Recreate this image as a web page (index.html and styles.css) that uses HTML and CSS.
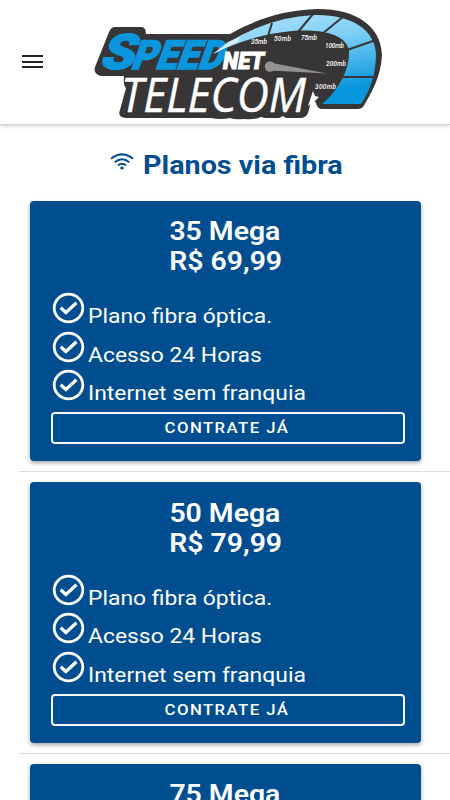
FILE: index.html
```html
<!DOCTYPE html>
<html lang="pt-BR">
<head>
<meta charset="utf-8">
<title>SpeedNet Telecom</title>
<link rel="stylesheet" href="styles.css">
</head>
<body>
<svg class="defs" width="0" height="0" aria-hidden="true">
  <symbol id="check" viewBox="0 0 32 32">
    <ellipse cx="16" cy="16" rx="14.3" ry="13.8" fill="none" stroke="currentColor" stroke-width="2.8"/>
    <path d="M8.200 15.700L13.400 20.500L24 10.800" fill="none" stroke="currentColor" stroke-width="3.200"/>
  </symbol>
</svg>
<header class="bar">
  <button class="menu" aria-label="Menu"><i></i><i></i><i></i></button>
  <svg class="logo" viewBox="90 0 300 124" role="img">
    <defs>
      <linearGradient id="dial" x1="0" y1="0" x2="0.35" y2="1">
        <stop offset="0" stop-color="#b5e4fa"/><stop offset=".45" stop-color="#7dcff5"/><stop offset="1" stop-color="#0796dc"/>
      </linearGradient>
    </defs>
    <path fill="#373536" d="M115 27H142Q146 28 146 34H230C248 24 276 10 318 9C356 9 381 26 382 55C381 76 372 92 363 107Q361 109 358 109H321Q317 108 316 103L312 98L308 113Q306 118 300 118H286L283 116L279 118H265L261 117Q254 120 244 119Q235 120 230 118Q221 120 211 118L207 118H126Q117 117 120 110L126 88Q123 85 124 76H101Q93 74 95 67L109 32Q111 27 115 27Z"/>
    <path fill="url(#dial)" d="M213 54L229 42Q270 17 314 15C350 14 375 29 376 54C376 74 370 91 361 104H322C338 91 350 70 349 50C345 34 322 29 292 31C260 34 235 43 213 54Z"/>
    <path fill="none" stroke="#373536" stroke-width="2" d="M272 23L268 36M313 14L298 32M344 16L322 34M376 40L347 50M373 77H339"/>
    <g class="logo-speed">
      <text transform="translate(98 69.300) skewX(-20)" font-size="49" textLength="34" lengthAdjust="spacingAndGlyphs">S</text>
      <text transform="translate(130 69.300) skewX(-20)" font-size="40" textLength="91" lengthAdjust="spacingAndGlyphs">PEED</text>
    </g>
    <path fill="#d8eef9" d="M213 54L228 42L240 37L238 42Z"/>
    <text class="logo-net" x="223" y="69" font-size="24" textLength="41" lengthAdjust="spacingAndGlyphs">NET</text>
    <text class="logo-telecom" x="121" y="111.500" font-size="48" textLength="185" lengthAdjust="spacingAndGlyphs">TELECOM</text>
    <path fill="#fff" d="M313 91L315 96L319 97L315 101L308 106Z"/>
    <path fill="#929292" d="M270 62.500L327 73.500L270 70.500Z"/><circle cx="270" cy="66.500" r="5.200" fill="#929292"/>
    <g class="logo-scale">
      <text x="251" y="44" textLength="16">35mb</text>
      <text x="274" y="41" textLength="17">50mb</text>
      <text x="301" y="39.500" textLength="16">75mb</text>
      <text x="325" y="47.500" textLength="19">100mb</text>
      <text x="326" y="66" textLength="20">200mb</text>
      <text x="315" y="88.500" textLength="21">300mb</text>
    </g>
  </svg>
</header>
<main>
  <h1><svg class="wifi" viewBox="0 0 24 18"><g fill="none" stroke="currentColor" stroke-width="2"><path d="M1 5.800Q12-3 23 5.800"/><path d="M4.700 9.200Q12 3.200 19.300 9.200"/><path d="M8 12.400Q12 9.200 16 12.400"/></g><ellipse cx="12" cy="15" rx="1.800" ry="1.600" fill="currentColor"/></svg><span>Planos via fibra</span></h1>
  <section class="plan">
    <h2><span>35 Mega</span><span>R$ 69,99</span></h2>
    <ul>
      <li><svg><use href="#check"/></svg><span>Plano fibra óptica.</span></li>
      <li><svg><use href="#check"/></svg><span>Acesso 24 Horas</span></li>
      <li><svg><use href="#check"/></svg><span>Internet sem franquia</span></li>
    </ul>
    <button class="hire"><span>CONTRATE JÁ</span></button>
  </section>
  <hr>
  <section class="plan middle">
    <h2><span>50 Mega</span><span>R$ 79,99</span></h2>
    <ul>
      <li><svg><use href="#check"/></svg><span>Plano fibra óptica.</span></li>
      <li><svg><use href="#check"/></svg><span>Acesso 24 Horas</span></li>
      <li><svg><use href="#check"/></svg><span>Internet sem franquia</span></li>
    </ul>
    <button class="hire"><span>CONTRATE JÁ</span></button>
  </section>
  <hr>
  <section class="plan last">
    <h2><span>75 Mega</span></h2>
  </section>
</main>
</body>
</html>
```
FILE: styles.css
```css
* { box-sizing: border-box; margin: 0; padding: 0; }
html, body { height: 800px; overflow: hidden; }
body { background: #fff; font-family: Roboto, sans-serif; }
.defs { display: block; }
.bar { height: 125px; display: flex; border-bottom: 1px solid #d2d2d2; box-shadow: 0 1px 4px rgba(0,0,0,.2); }
.menu { margin: 55px 0 0 22px; width: 21px; height: 13px; border: 0; background: none; display: flex; flex-direction: column; justify-content: space-between; }
.menu i { display: block; width: 21px; height: 2px; background: #222; }
.logo { margin-left: 47px; width: 300px; height: 124px; }
.logo-speed { fill: #0996dc; stroke: #0996dc; stroke-width: 1.6; stroke-linejoin: miter; font-weight: 900; }
.logo-net { fill: #fff; stroke: #fff; stroke-width: 1; font-weight: 900; font-style: italic; }
.logo-telecom { fill: #fff; stroke: #fff; stroke-width: .4; font-family: "Open Sans", "Noto Sans", sans-serif; font-weight: 400; font-style: italic; }
.logo-scale { fill: #fff; font-size: 6.5px; font-weight: 500; font-style: italic; }
h1 { height: 76px; padding: 25px 0 0 110px; display: flex; align-items: flex-start; color: #004e90; font-size: 25px; line-height: 32px; font-weight: 700; }
h1 .wifi { width: 24px; height: 18px; margin: 3px 9px 0 0; }
h1 span { transform: scaleX(1.15); transform-origin: left; white-space: nowrap; }
.plan { width: 391px; height: 260px; margin-left: 30px; padding: 16px 16px 0 20.5px; border-radius: 4px; background: #004e90; color: #fff; box-shadow: 0 2px 4px rgba(0,0,0,.35); }
.plan.middle { height: 260.6px; padding-top: 17px; }
.plan.middle ul { height: 119.5px; margin-top: 13.5px; }
.plan.last { height: 40px; border-radius: 4px 4px 0 0; }
h2 { display: flex; flex-direction: column; align-items: center; margin-right: 5px; font-size: 25px; line-height: 30px; font-weight: 600; }
h2 span { transform: scaleX(1.135); }
ul { list-style: none; height: 119px; margin-top: 14px; }
li { height: 38.6px; display: flex; align-items: flex-start; font-size: 21px; line-height: 30px; }
li svg { width: 33px; height: 32px; margin: 1px 3px 0 1.5px; flex: none; }
li span { margin-top: 10px; transform: scaleX(1.09); transform-origin: left; white-space: nowrap; }
.hire { display: block; width: 354px; height: 32px; margin-top: 2px; border: 2px solid #f4f8fb; border-radius: 4px; background: none; color: #fff; font: 500 15px/26px Roboto, sans-serif; letter-spacing: 1.3px; }
.hire span { display: inline-block; margin-right: 1px; transform: scaleX(1.115); }
hr { border: 0; height: 1px; background: #dedede; margin: 10px 0 10.4px 19px; }
```
